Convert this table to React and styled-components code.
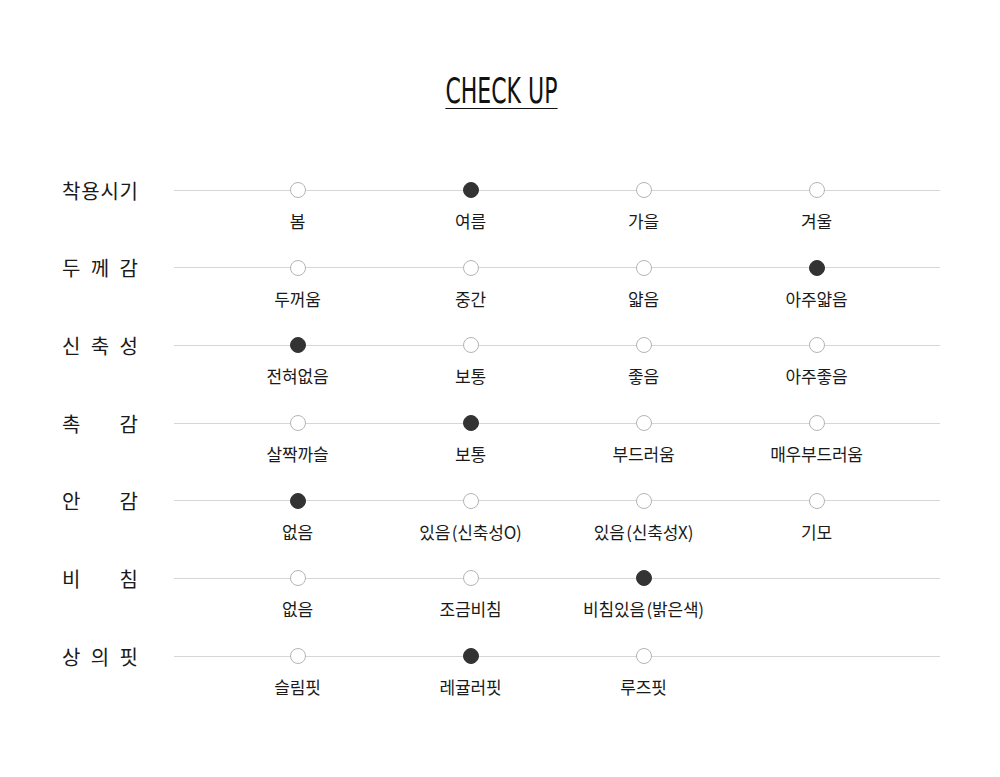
import React from 'react';
import styled, { createGlobalStyle } from 'styled-components';

const GlobalStyle = createGlobalStyle`
  html, body {
    margin: 0;
    padding: 0;
    background: #fff;
  }
  body {
    font-family: "Noto Sans CJK KR", "Noto Sans", sans-serif;
    color: #222;
  }
`;

const Page = styled.div`
  width: 1000px;
  padding: 73px 60px 0 62px;
  box-sizing: border-box;
`;

const TitleWrap = styled.div`
  display: flex;
  justify-content: center;
  margin-bottom: 73px;
`;

const Title = styled.h2`
  margin: 0;
  font-family: "DejaVu Sans Condensed", "DejaVu Sans", sans-serif;
  font-stretch: condensed;
  font-weight: 400;
  font-size: 36px;
  line-height: 35px;
  color: #111;
  border-bottom: 1.5px solid #111;
  transform: scaleX(0.68);
`;

const Rows = styled.div`
  display: flex;
  flex-direction: column;
  gap: 27.7px;
`;

const Row = styled.div`
  display: grid;
  grid-template-columns: 112px 1fr;
`;

const Label = styled.div`
  width: 76px;
  height: 16px;
  display: flex;
  justify-content: space-between;
  align-items: center;
  font-size: 20px;
  font-weight: 400;
  color: #1a1a1a;
`;

const Track = styled.div`
  position: relative;
  &::before {
    content: '';
    position: absolute;
    left: 0;
    right: 0;
    top: 7.5px;
    height: 1px;
    background: #d6d6d6;
  }
`;

const Options = styled.div`
  position: relative;
  display: grid;
  grid-template-columns: repeat(4, 173px);
  padding-left: 37px;
`;

const Option = styled.div`
  display: flex;
  flex-direction: column;
  align-items: center;
  gap: 12px;
`;

const Dot = styled.span`
  width: 16px;
  height: 16px;
  box-sizing: border-box;
  border-radius: 50%;
  border: 1px solid ${p => (p.$on ? '#333' : '#b5b5b5')};
  background: ${p => (p.$on ? '#333' : '#fff')};
`;

const OptionText = styled.span`
  font-size: 17px;
  line-height: 22px;
  letter-spacing: -0.2px;
  word-spacing: -2px;
  color: #1a1a1a;
  white-space: nowrap;
`;

const data = [
  { label: '착용시기', options: ['봄', '여름', '가을', '겨울'], on: 1 },
  { label: '두께감', options: ['두꺼움', '중간', '얇음', '아주얇음'], on: 3 },
  { label: '신축성', options: ['전혀없음', '보통', '좋음', '아주좋음'], on: 0 },
  { label: '촉감', options: ['살짝까슬', '보통', '부드러움', '매우부드러움'], on: 1 },
  { label: '안감', options: ['없음', '있음 (신축성O)', '있음 (신축성X)', '기모'], on: 0 },
  { label: '비침', options: ['없음', '조금비침', '비침있음 (밝은색)'], on: 2 },
  { label: '상의핏', options: ['슬림핏', '레귤러핏', '루즈핏'], on: 1 },
];

const App = () => (
  <>
    <GlobalStyle />
    <Page>
      <TitleWrap>
        <Title>CHECK UP</Title>
      </TitleWrap>
      <Rows>
        {data.map(row => (
          <Row key={row.label}>
            <Label>
              {row.label.split('').map((ch, i) => (
                <span key={i}>{ch}</span>
              ))}
            </Label>
            <Track>
              <Options>
                {row.options.map((opt, i) => (
                  <Option key={opt}>
                    <Dot $on={i === row.on} />
                    <OptionText>{opt}</OptionText>
                  </Option>
                ))}
              </Options>
            </Track>
          </Row>
        ))}
      </Rows>
    </Page>
  </>
);

export default App;
